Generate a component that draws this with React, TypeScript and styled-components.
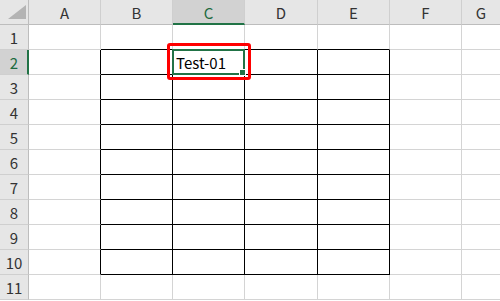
import { Fragment } from "react";
import styled, { createGlobalStyle } from "styled-components";

const GlobalStyle = createGlobalStyle`
  html, body {
    margin: 0;
    padding: 0;
    background: #ffffff;
  }
  body {
    font-family: "Noto Sans CJK JP", "Noto Sans", sans-serif;
    overflow: hidden;
  }
`

const GREEN = "#217346"
const GRID = "#d4d4d4"
const INK = "#000000"

const COLS = ["A", "B", "C", "D", "E", "F", "G"]
const WIDTHS = [72, 72, 72, 73, 72, 72, 39]
const ROWS = 11

const Sheet = styled.div`
  display: grid;
  grid-template-columns: 29px ${WIDTHS.map((w) => w + "px").join(" ")};
  grid-template-rows: 25px repeat(${ROWS}, 25px);
  width: 500px;
  height: 301px;
  overflow: hidden;
`

const Corner = styled.div`
  background: #e6e6e6;
  border-right: 1px solid #bdbdbd;
  border-bottom: 1px solid #bdbdbd;
  position: relative;
  box-sizing: border-box;
`

const Triangle = styled.div`
  position: absolute;
  left: 8px;
  top: 5px;
  width: 0;
  height: 0;
  border-left: 18px solid transparent;
  border-bottom: 14px solid #b4b4b4;
`

const ColHead = styled.div<{ $active?: boolean }>`
  box-sizing: border-box;
  background: ${(p) => (p.$active ? "#d2d2d2" : "#e6e6e6")};
  border-right: 1px solid #cfcfcf;
  border-bottom: ${(p) => (p.$active ? `2px solid ${GREEN}` : "1px solid #bdbdbd")};
  color: ${(p) => (p.$active ? "#1e6b3f" : "#333333")};
  font-size: 15px;
  display: flex;
  align-items: center;
  justify-content: center;
  padding-top: ${(p) => (p.$active ? "1px" : "0")};
`

const RowHead = styled.div<{ $active?: boolean }>`
  box-sizing: border-box;
  background: ${(p) => (p.$active ? "#d2d2d2" : "#e6e6e6")};
  border-right: ${(p) => (p.$active ? `2px solid ${GREEN}` : "1px solid #bdbdbd")};
  border-bottom: 1px solid #cfcfcf;
  color: ${(p) => (p.$active ? "#1e6b3f" : "#333333")};
  font-size: 15px;
  display: flex;
  align-items: center;
  justify-content: center;
  padding-left: ${(p) => (p.$active ? "1px" : "0")};
`

const Cell = styled.div<{ $right: string; $bottom: string }>`
  box-sizing: border-box;
  position: relative;
  background: #ffffff;
  border-right: 1px solid ${(p) => p.$right};
  border-bottom: 1px solid ${(p) => p.$bottom};
  font-size: 15px;
  color: #000000;
  display: flex;
  align-items: center;
  padding-left: 3px;
  white-space: nowrap;
`

// overlays drawn above neighbouring cells
const Selection = styled.div`
  position: absolute;
  z-index: 2;
  left: -1px;
  top: -1px;
  width: 73px;
  height: 26px;
  box-sizing: border-box;
  border: 2px solid ${GREEN};
`

const FillHandle = styled.div`
  position: absolute;
  right: -3px;
  bottom: -3px;
  width: 5px;
  height: 5px;
  background: ${GREEN};
  border: 1px solid #ffffff;
`

const Callout = styled.div`
  position: absolute;
  z-index: 3;
  left: -6px;
  top: -7px;
  width: 84px;
  height: 37px;
  box-sizing: border-box;
  border: 3.5px solid #ff0000;
  border-radius: 3px;
`

// table box: B2:E10
const inTable = (c: number, r: number) => c >= 1 && c <= 4 && r >= 2 && r <= 10

const App = () => {
  const rows = Array.from({ length: ROWS }, (_, i) => i + 1)
  return (
    <>
      <GlobalStyle />
      <Sheet>
        <Corner>
          <Triangle />
        </Corner>
        {COLS.map((c, i) => (
          <ColHead key={c} $active={i === 2}>{c}</ColHead>
        ))}
        {rows.map((r) => (
          <Fragment key={r}>
            <RowHead $active={r === 2}>{r}</RowHead>
            {COLS.map((c, ci) => {
              const right = inTable(ci, r) || inTable(ci + 1, r) ? INK : GRID
              const bottom = inTable(ci, r) || inTable(ci, r + 1) ? INK : GRID
              const selected = ci === 2 && r === 2
              return (
                <Cell key={c + r} $right={right} $bottom={bottom}>
                  {selected && (
                    <>
                      Test-01
                      <Selection>
                        <FillHandle />
                      </Selection>
                      <Callout />
                    </>
                  )}
                </Cell>
              )
            })}
          </Fragment>
        ))}
      </Sheet>
    </>
  )
}

export default App
